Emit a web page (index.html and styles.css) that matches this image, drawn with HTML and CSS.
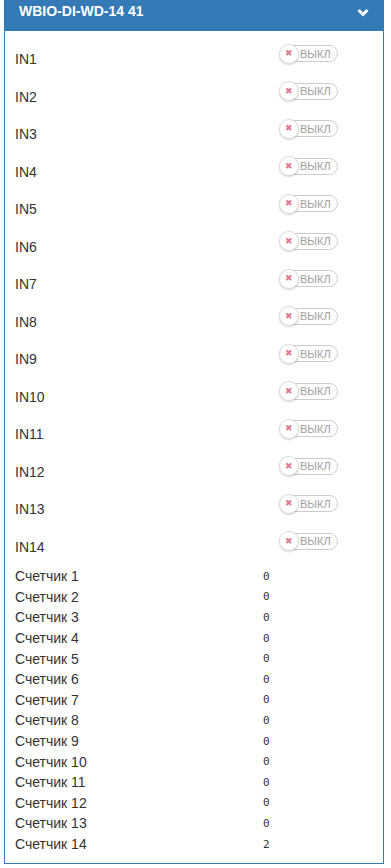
FILE: index.html
```html
<!DOCTYPE html>
<html lang="ru">
<head>
<meta charset="utf-8">
<link rel="stylesheet" href="styles.css">
</head>
<body>
<div class="panel">
  <div class="panel-heading">
    <span class="title">WBIO-DI-WD-14 41</span>
    <svg class="chev" width="12" height="9" viewBox="0 0 12 9"><path d="M1.5 2 L6 6.5 L10.5 2" fill="none" stroke="#fff" stroke-width="3"/></svg>
  </div>
  <div class="panel-body">
    <div class="inputs">
      <div class="row"><span class="label">IN1</span><span class="switch"><span class="knob">✖</span><span class="st">ВЫКЛ</span></span></div>
      <div class="row"><span class="label">IN2</span><span class="switch"><span class="knob">✖</span><span class="st">ВЫКЛ</span></span></div>
      <div class="row"><span class="label">IN3</span><span class="switch"><span class="knob">✖</span><span class="st">ВЫКЛ</span></span></div>
      <div class="row"><span class="label">IN4</span><span class="switch"><span class="knob">✖</span><span class="st">ВЫКЛ</span></span></div>
      <div class="row"><span class="label">IN5</span><span class="switch"><span class="knob">✖</span><span class="st">ВЫКЛ</span></span></div>
      <div class="row"><span class="label">IN6</span><span class="switch"><span class="knob">✖</span><span class="st">ВЫКЛ</span></span></div>
      <div class="row"><span class="label">IN7</span><span class="switch"><span class="knob">✖</span><span class="st">ВЫКЛ</span></span></div>
      <div class="row"><span class="label">IN8</span><span class="switch"><span class="knob">✖</span><span class="st">ВЫКЛ</span></span></div>
      <div class="row"><span class="label">IN9</span><span class="switch"><span class="knob">✖</span><span class="st">ВЫКЛ</span></span></div>
      <div class="row"><span class="label">IN10</span><span class="switch"><span class="knob">✖</span><span class="st">ВЫКЛ</span></span></div>
      <div class="row"><span class="label">IN11</span><span class="switch"><span class="knob">✖</span><span class="st">ВЫКЛ</span></span></div>
      <div class="row"><span class="label">IN12</span><span class="switch"><span class="knob">✖</span><span class="st">ВЫКЛ</span></span></div>
      <div class="row"><span class="label">IN13</span><span class="switch"><span class="knob">✖</span><span class="st">ВЫКЛ</span></span></div>
      <div class="row"><span class="label">IN14</span><span class="switch"><span class="knob">✖</span><span class="st">ВЫКЛ</span></span></div>
    </div>
    <div class="counters">
      <div class="crow"><span class="clabel">Счетчик 1</span><span class="val">0</span></div>
      <div class="crow"><span class="clabel">Счетчик 2</span><span class="val">0</span></div>
      <div class="crow"><span class="clabel">Счетчик 3</span><span class="val">0</span></div>
      <div class="crow"><span class="clabel">Счетчик 4</span><span class="val">0</span></div>
      <div class="crow"><span class="clabel">Счетчик 5</span><span class="val">0</span></div>
      <div class="crow"><span class="clabel">Счетчик 6</span><span class="val">0</span></div>
      <div class="crow"><span class="clabel">Счетчик 7</span><span class="val">0</span></div>
      <div class="crow"><span class="clabel">Счетчик 8</span><span class="val">0</span></div>
      <div class="crow"><span class="clabel">Счетчик 9</span><span class="val">0</span></div>
      <div class="crow"><span class="clabel">Счетчик 10</span><span class="val">0</span></div>
      <div class="crow"><span class="clabel">Счетчик 11</span><span class="val">0</span></div>
      <div class="crow"><span class="clabel">Счетчик 12</span><span class="val">0</span></div>
      <div class="crow"><span class="clabel">Счетчик 13</span><span class="val">0</span></div>
      <div class="crow"><span class="clabel">Счетчик 14</span><span class="val">2</span></div>
    </div>
  </div>
</div>
</body>
</html>
```
FILE: styles.css
```css
html, body {
  margin: 0;
  padding: 0;
  background: #fff;
}
body {
  font-family: "Liberation Sans", Arial, sans-serif;
  font-size: 14px;
  color: #333;
}
.panel {
  margin: 0 7px 5px 4px;
  border: 1px solid #337ab7;
  border-top: 0;
}
.panel-heading {
  background: #337ab7;
  color: #fff;
  height: 31px;
  margin: 0 -1px;
  padding: 0 15px 0 15px;
  display: flex;
  align-items: flex-start;
  justify-content: space-between;
}
.title {
  font-weight: bold;
  font-size: 14px;
  line-height: 16px;
  padding-top: 3px;
}
.chev {
  margin-top: 8px;
}
.panel-body {
  padding: 3px 10px 9px 10px;
}
.row {
  height: 37.5px;
  display: flex;
  align-items: flex-start;
}
.label {
  width: 265px;
  padding-top: 17px;
  line-height: 16px;
}
.switch {
  margin-top: 11px;
  width: 58px;
  height: 17px;
  border: 1px solid #ccc;
  border-radius: 9px;
  box-sizing: border-box;
  display: flex;
  align-items: center;
}
.knob {
  width: 20px;
  height: 20px;
  flex: none;
  border-radius: 50%;
  background: #fff;
  border: 1px solid #ddd;
  box-shadow: 0 1px 2px rgba(0,0,0,0.18);
  box-sizing: border-box;
  margin-left: -2px;
  display: flex;
  align-items: center;
  justify-content: center;
  color: #e07a8c;
  font-size: 9px;
  line-height: 1;
}
.st {
  color: #a0a0a0;
  font-size: 11px;
  margin-left: 1px;
}
.counters {
  padding-top: 7px;
}
.crow {
  display: flex;
  height: 20.6px;
  align-items: center;
}
.clabel {
  width: 248px;
}
.val {
  font-family: "DejaVu Sans Mono", monospace;
  font-size: 11px;
}
```
